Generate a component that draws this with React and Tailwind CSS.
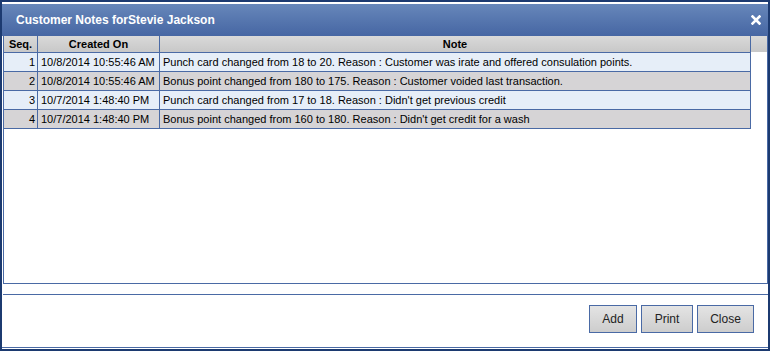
import React from "react";

const notes = [
  {
    seq: 1,
    created: "10/8/2014 10:55:46 AM",
    note: "Punch card changed from 18 to 20. Reason : Customer was irate and offered consulation points.",
  },
  {
    seq: 2,
    created: "10/8/2014 10:55:46 AM",
    note: "Bonus point changed from 180 to 175. Reason : Customer voided last transaction.",
  },
  {
    seq: 3,
    created: "10/7/2014 1:48:40 PM",
    note: "Punch card changed from 17 to 18. Reason : Didn't get previous credit",
  },
  {
    seq: 4,
    created: "10/7/2014 1:48:40 PM",
    note: "Bonus point changed from 160 to 180. Reason : Didn't get credit for a wash",
  },
];

function DialogButton({ label, width }) {
  return (
    <button
      className={`h-[28px] ${width} border border-[#4a6aa5] bg-gradient-to-b from-[#e4e4e4] to-[#cdcdcd] text-[12px] text-[#222]`}
    >
      {label}
    </button>
  );
}

export default function App() {
  return (
    <div
      className="w-[770px] h-[351px] border-2 border-[#1c3a70] bg-white flex flex-col overflow-hidden"
      style={{ fontFamily: '"Liberation Sans", Arial, sans-serif' }}
    >
      {/* Title bar */}
      <div className="border-t-2 border-white">
        <div className="h-[32px] flex items-center justify-between pl-[14px] pr-[7px] bg-gradient-to-b from-[#6787ba] to-[#4666a3]">
          <span className="text-[12px] font-bold text-white">
            Customer Notes forStevie Jackson
          </span>
          <svg width="10" height="10" viewBox="0 0 10 10">
            <path d="M1.5 1.5 L8.5 8.5 M8.5 1.5 L1.5 8.5" stroke="white" strokeWidth="2.6" strokeLinecap="square" />
          </svg>
        </div>
      </div>

      {/* Grid */}
      <div className="pl-[1px]">
        <div className="w-[765px] h-[248px] border-x border-b border-[#4a6aa5] text-[11px] text-black">
          <div className="h-[16px] flex font-bold bg-gradient-to-b from-[#d9d9d9] to-[#c8c8c8]">
            <div className="w-[34px] border-r border-[#4a6aa5] text-center leading-[16px]">Seq.</div>
            <div className="w-[122px] border-r border-[#4a6aa5] text-center leading-[16px]">Created On</div>
            <div className="w-[591px] border-r border-[#4a6aa5] text-center leading-[16px]">Note</div>
            <div className="flex-1"></div>
          </div>
          {notes.map((n, i) => (
            <div
              key={n.seq}
              className={`w-[747px] h-[19px] flex border-t border-r border-[#4a6aa5] ${
                i === notes.length - 1 ? "h-[20px] border-b" : ""
              } ${i % 2 === 0 ? "bg-[#e6eef8]" : "bg-[#d6d4d6]"}`}
            >
              <div className="w-[34px] border-r border-[#4a6aa5] text-right pr-[2px] leading-[18px]">{n.seq}</div>
              <div className="w-[122px] border-r border-[#4a6aa5] pl-[3px] leading-[18px] whitespace-nowrap">{n.created}</div>
              <div className="flex-1 pl-[3px] leading-[18px] whitespace-nowrap">{n.note}</div>
            </div>
          ))}
        </div>
      </div>

      {/* Separator */}
      <div className="ml-[1px] mt-[10px] border-t border-[#4a6aa5]"></div>

      {/* Buttons */}
      <div className="mt-[10px] flex justify-end pr-[14px]">
        <DialogButton label="Add" width="w-[48px]" />
        <div className="w-[4px]"></div>
        <DialogButton label="Print" width="w-[52px]" />
        <div className="w-[4px]"></div>
        <DialogButton label="Close" width="w-[57px]" />
      </div>

      <div className="mt-[14px] border-b border-[#4a6aa5]"></div>
    </div>
  );
}
